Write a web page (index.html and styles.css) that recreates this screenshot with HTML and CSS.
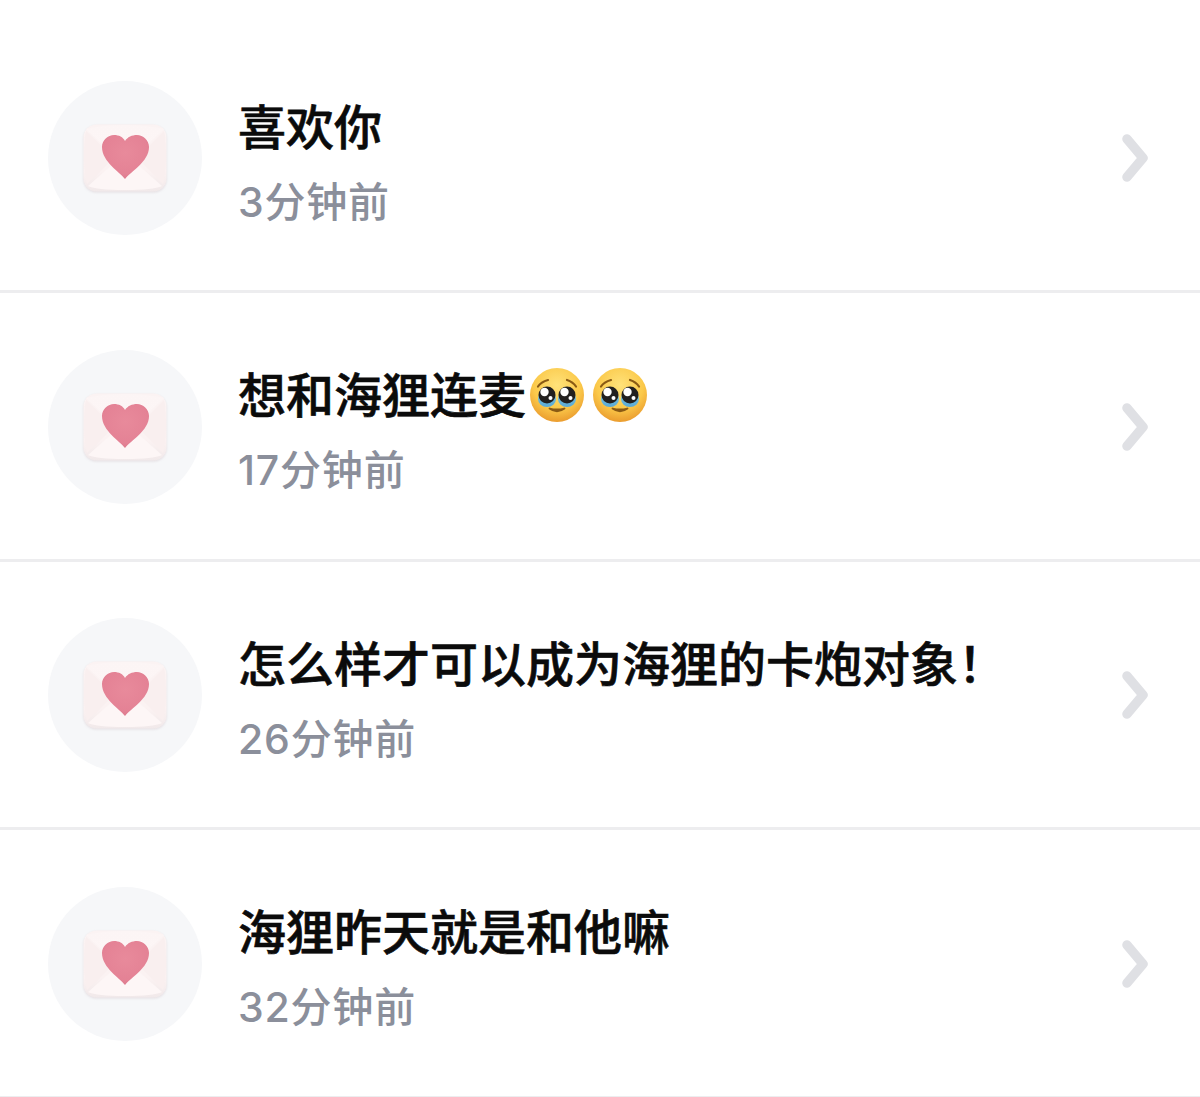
FILE: index.html
```html
<!DOCTYPE html>
<html lang="zh-CN">
<head>
<meta charset="utf-8">
<title>消息</title>
<link rel="stylesheet" href="styles.css">
</head>
<body>
<svg class="sprites" width="0" height="0" aria-hidden="true">
  <defs>
    <linearGradient id="env-body" x1="0" y1="0" x2="0" y2="1">
      <stop offset="0" stop-color="#fbf3f3"/>
      <stop offset="0.7" stop-color="#fbf2f2"/>
      <stop offset="1" stop-color="#f1e9ea"/>
    </linearGradient>
    <linearGradient id="env-flap" x1="0" y1="0" x2="0" y2="1">
      <stop offset="0" stop-color="#fcf5f5"/>
      <stop offset="1" stop-color="#fdf6f6"/>
    </linearGradient>
    <radialGradient id="heart-fill" cx="0.5" cy="0.4" r="0.65">
      <stop offset="0" stop-color="#e88a9b"/>
      <stop offset="0.75" stop-color="#e48295"/>
      <stop offset="1" stop-color="#d9788b"/>
    </radialGradient>
    <radialGradient id="face-fill" cx="0.5" cy="0.32" r="0.72">
      <stop offset="0" stop-color="#ffe27a"/>
      <stop offset="0.6" stop-color="#fbc94a"/>
      <stop offset="1" stop-color="#e8952a"/>
    </radialGradient>
    <linearGradient id="tear-fill" x1="0" y1="0" x2="0" y2="1">
      <stop offset="0" stop-color="#7cc8e4"/>
      <stop offset="1" stop-color="#5aa9d4"/>
    </linearGradient>
    <symbol id="icon-letter" viewBox="0 0 84 68">
      <rect x="0.5" y="0.5" width="83" height="67" rx="13" fill="url(#env-body)"/>
      <path d="M3 7 L31 34 L4 60 Q1 50 1 34 Q1 16 3 7Z" fill="#f9efef"/>
      <path d="M81 7 L54 34 L80 60 Q83 50 83 34 Q83 16 81 7Z" fill="#f9efef"/>
      <path d="M5 62 L32 38 Q42 46 52 38 L79 62 Q70 66 42 66 Q14 66 5 62Z" fill="#fdf6f6"/>
      <path d="M3 5 Q20 1 42 1 Q64 1 81 5 L48 36 Q42 41 36 36Z" fill="url(#env-flap)"/>
      <path d="M42 55 C37 48 19 38 19 23 C19 16 25 11 31 11 C36 11 40 13 42 17 C44.500 13 49 11 54 11 C60 11 66 16 66 23 C66 38 47 48 42 55Z" fill="url(#heart-fill)"/>
    </symbol>
    <symbol id="icon-pleading" viewBox="0 0 54 54">
      <circle cx="27" cy="27" r="27" fill="url(#face-fill)"/>
      <path d="M8 18.500 Q11 14 18 12" fill="none" stroke="#8a5a14" stroke-width="2.200" stroke-linecap="round"/>
      <path d="M46 18.500 Q43 14 37 12" fill="none" stroke="#8a5a14" stroke-width="2.200" stroke-linecap="round"/>
      <ellipse cx="17" cy="31" rx="9" ry="8" fill="url(#tear-fill)"/>
      <ellipse cx="37" cy="31" rx="9" ry="8" fill="url(#tear-fill)"/>
      <circle cx="17" cy="27" r="8.500" fill="#22201f"/>
      <circle cx="37" cy="27" r="8.500" fill="#22201f"/>
      <circle cx="14.500" cy="24" r="4.200" fill="#fff"/>
      <circle cx="34.500" cy="24" r="4.200" fill="#fff"/>
      <circle cx="20.500" cy="30" r="2" fill="#fff"/>
      <circle cx="40.500" cy="30" r="2" fill="#fff"/>
      <path d="M19.500 40.500 Q27 46 34.500 40.500 Q27 42.500 19.500 40.500Z" fill="#8a5a14" stroke="#8a5a14" stroke-width="1.800" stroke-linejoin="round"/>
    </symbol>
    <symbol id="icon-chevron" viewBox="0 0 26 48">
      <path d="M5 5 L21 24 L5 43" fill="none" stroke="#dfe0e4" stroke-width="9.500" stroke-linecap="round" stroke-linejoin="round"/>
    </symbol>
  </defs>
</svg>

<main class="list">
  <article class="row">
    <div class="avatar"><svg class="letter"><use href="#icon-letter"/></svg></div>
    <div class="body">
      <h2 class="title">喜欢你</h2>
      <p class="time">3分钟前</p>
    </div>
    <svg class="chevron"><use href="#icon-chevron"/></svg>
  </article>
  <article class="row">
    <div class="avatar"><svg class="letter"><use href="#icon-letter"/></svg></div>
    <div class="body">
      <h2 class="title">想和海狸连麦<svg class="emoji"><use href="#icon-pleading"/></svg><svg class="emoji"><use href="#icon-pleading"/></svg></h2>
      <p class="time">17分钟前</p>
    </div>
    <svg class="chevron"><use href="#icon-chevron"/></svg>
  </article>
  <article class="row">
    <div class="avatar"><svg class="letter"><use href="#icon-letter"/></svg></div>
    <div class="body">
      <h2 class="title">怎么样才可以成为海狸的卡炮对象！</h2>
      <p class="time">26分钟前</p>
    </div>
    <svg class="chevron"><use href="#icon-chevron"/></svg>
  </article>
  <article class="row">
    <div class="avatar"><svg class="letter"><use href="#icon-letter"/></svg></div>
    <div class="body">
      <h2 class="title">海狸昨天就是和他嘛</h2>
      <p class="time">32分钟前</p>
    </div>
    <svg class="chevron"><use href="#icon-chevron"/></svg>
  </article>
</main>
</body>
</html>
```

FILE: styles.css
```css
* {
  box-sizing: border-box;
}

html,
body {
  margin: 0;
  height: 100%;
  background: #fff;
  overflow: hidden;
}

body {
  font-family: "Noto Sans CJK SC", "Liberation Sans", sans-serif;
}

.sprites {
  position: absolute;
}

.list {
  padding-top: 24.5px;
}

.row {
  display: flex;
  align-items: center;
  height: 268.5px;
  padding: 2px 52px 0 48px;
  border-bottom: 3px solid #ededef;
}

.avatar {
  flex: none;
  display: flex;
  align-items: center;
  justify-content: center;
  width: 154px;
  height: 154px;
  margin-right: 36px;
  border-radius: 50%;
  background: #f6f7f9;
}

.letter {
  width: 84px;
  height: 68px;
  filter: drop-shadow(0 1px 1px rgba(190, 170, 175, 0.3));
}

.body {
  flex: 1;
  min-width: 0;
  display: flex;
  flex-direction: column;
  gap: 18px;
  padding-top: 9px;
}

.title {
  display: flex;
  align-items: center;
  margin: 0;
  height: 60px;
  font-size: 48px;
  line-height: 60px;
  font-weight: 500;
  -webkit-text-stroke: 0.6px #0b0b0b;
  color: #0b0b0b;
}

.emoji {
  flex: none;
  width: 54px;
  height: 54px;
  margin: 6px 5px 0 4px;
}

.time {
  margin: 0;
  height: 60px;
  font-family: "Inter", "Noto Sans CJK SC", sans-serif;
  font-size: 41px;
  font-weight: 500;
  line-height: 60px;
  letter-spacing: 0.8px;
  color: #8b8f9b;
}

.chevron {
  flex: none;
  width: 26px;
  height: 48px;
}
```
